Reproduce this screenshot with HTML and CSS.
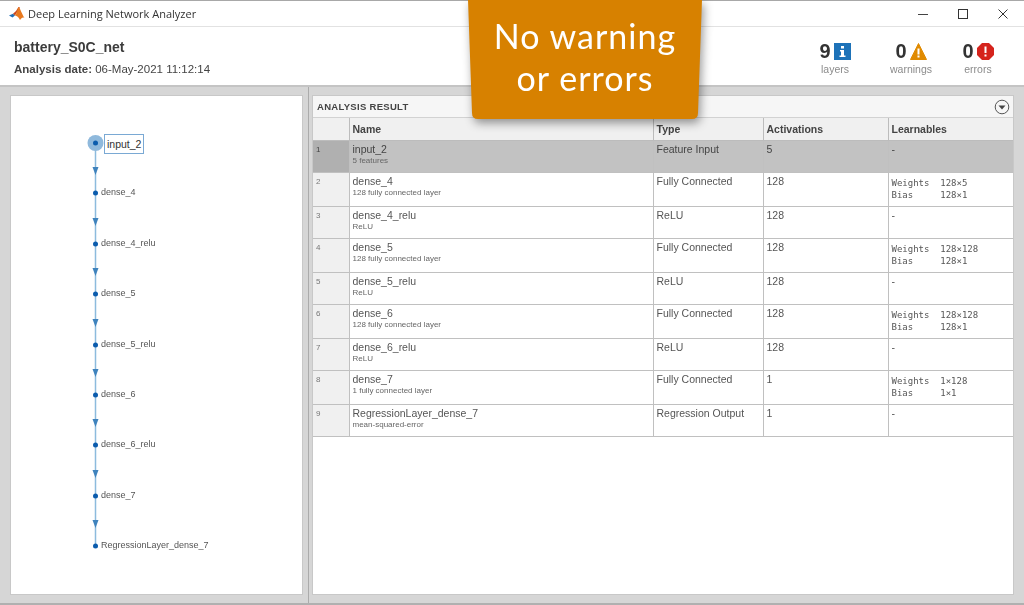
FILE: index.html
```html
<!DOCTYPE html>
<html lang="en">
<head>
  <meta charset="UTF-8">
  <title>Deep Learning Network Analyzer</title>
  <link rel="stylesheet" href="styles.css">
</head>
<body>
  <div class="window">
    <div class="titlebar">
      <svg class="logo" width="16" height="16" viewBox="0 0 16 16">
        <path d="M0 9.5 L4 7.8 L6 9.5 L3.5 11.5 Z" fill="#1f6fb5"/>
        <path d="M4 7.8 L7 5 L9.5 1 L11 1.5 L6 9.5 Z" fill="#c9481e"/>
        <path d="M9.5 1 C11 2 13 8 15.5 12 C13.5 11 12.5 12 11 14 C9.5 11 8 10 6 9.5 C8 7 8.500 3 9.500 1 Z" fill="#e8791f"/>
      </svg>
      <span class="title">Deep Learning Network Analyzer</span>
      <div class="win-controls">
        <svg width="12" height="12" viewBox="0 0 12 12"><path d="M1 6.500 H11" stroke="#444" stroke-width="1"/></svg>
        <svg width="12" height="12" viewBox="0 0 12 12"><rect x="1.500" y="1.500" width="9" height="9" fill="none" stroke="#333" stroke-width="1"/></svg>
        <svg width="12" height="12" viewBox="0 0 12 12"><path d="M1.500 1.500 L10.500 10.500 M10.500 1.500 L1.500 10.500" stroke="#333" stroke-width="1"/></svg>
      </div>
    </div>

    <header class="summary">
      <div class="net-info">
        <h1>battery_S0C_net</h1>
        <p><b>Analysis date:</b> 06-May-2021 11:12:14</p>
      </div>
      <div class="stats">
        <div class="stat stat-layers">
          <div class="stat-top"><span class="num">9</span>
            <svg width="17" height="17" viewBox="0 0 17 17"><rect width="17" height="17" fill="#1d72b8"/><rect x="7" y="3" width="3" height="2.500" fill="#fff"/><path d="M6 7 H10 V12.500 H11.500 V14 H5.500 V12.500 H7 V8.500 H6 Z" fill="#fff"/></svg>
          </div>
          <div class="stat-label">layers</div>
        </div>
        <div class="stat stat-warnings">
          <div class="stat-top"><span class="num">0</span>
            <svg width="17" height="17" viewBox="0 0 17 17"><path d="M8.500 0.500 L16.500 16.500 H0.500 Z" fill="#e08a00" stroke="#e08a00" stroke-linejoin="round"/><rect x="7.500" y="5.500" width="2" height="6" fill="#fff"/><rect x="7.500" y="12.500" width="2" height="2" fill="#fff"/></svg>
          </div>
          <div class="stat-label">warnings</div>
        </div>
        <div class="stat stat-errors">
          <div class="stat-top"><span class="num">0</span>
            <svg width="17" height="17" viewBox="0 0 17 17"><path d="M5 0 H12 L17 5 V12 L12 17 H5 L0 12 V5 Z" fill="#d5231c"/><rect x="7.500" y="3.500" width="2" height="6.500" fill="#fff"/><rect x="7.500" y="11.500" width="2" height="2" fill="#fff"/></svg>
          </div>
          <div class="stat-label">errors</div>
        </div>
      </div>
    </header>

    <main class="body">
      <section class="graph">
        <svg class="edges" width="293" height="499" viewBox="0 0 293 499">
          <path d="M84.500 47 V450" stroke="#8dbbdd" stroke-width="1.500"/>
          <g fill="#3f83bd">
            <path d="M81.500 71 h6 l-3 8 z"/>
            <path d="M81.500 122 h6 l-3 8 z"/>
            <path d="M81.500 172 h6 l-3 8 z"/>
            <path d="M81.500 223 h6 l-3 8 z"/>
            <path d="M81.500 273 h6 l-3 8 z"/>
            <path d="M81.500 323 h6 l-3 8 z"/>
            <path d="M81.500 374 h6 l-3 8 z"/>
            <path d="M81.500 424 h6 l-3 8 z"/>
          </g>
          <circle cx="84.500" cy="47" r="8" fill="#8fb9dc"/>
          <g fill="#0b5cad">
            <circle cx="84.500" cy="47" r="2.500"/>
            <circle cx="84.500" cy="97" r="2.500"/>
            <circle cx="84.500" cy="148" r="2.500"/>
            <circle cx="84.500" cy="198" r="2.500"/>
            <circle cx="84.500" cy="249" r="2.500"/>
            <circle cx="84.500" cy="299" r="2.500"/>
            <circle cx="84.500" cy="349" r="2.500"/>
            <circle cx="84.500" cy="400" r="2.500"/>
            <circle cx="84.500" cy="450" r="2.500"/>
          </g>
        </svg>
        <span class="node selected" style="top: 38px">input_2</span>
        <span class="node" style="top: 90px">dense_4</span>
        <span class="node" style="top: 141px">dense_4_relu</span>
        <span class="node" style="top: 191px">dense_5</span>
        <span class="node" style="top: 242px">dense_5_relu</span>
        <span class="node" style="top: 292px">dense_6</span>
        <span class="node" style="top: 342px">dense_6_relu</span>
        <span class="node" style="top: 393px">dense_7</span>
        <span class="node" style="top: 443px">RegressionLayer_dense_7</span>
      </section>

      <div class="splitter"></div>

      <section class="result">
        <div class="result-head">
          <span>ANALYSIS RESULT</span>
          <svg width="16" height="16" viewBox="0 0 16 16"><circle cx="8" cy="8" r="6.800" fill="none" stroke="#555" stroke-width="1"/><path d="M4.500 6.500 H11.500 L8 10.500 Z" fill="#444"/></svg>
        </div>
        <table>
          <colgroup><col class="c-idx"><col class="c-name"><col class="c-type"><col class="c-act"><col class="c-learn"></colgroup>
          <thead>
            <tr><th></th><th>Name</th><th>Type</th><th>Activations</th><th>Learnables</th></tr>
          </thead>
          <tbody>
            <tr class="sel"><td class="idx">1</td><td>input_2<small>5 features</small></td><td>Feature Input</td><td>5</td><td>-</td></tr>
            <tr><td class="idx">2</td><td>dense_4<small>128 fully connected layer</small></td><td>Fully Connected</td><td>128</td><td class="mono">Weights  128×5
Bias     128×1</td></tr>
            <tr><td class="idx">3</td><td>dense_4_relu<small>ReLU</small></td><td>ReLU</td><td>128</td><td>-</td></tr>
            <tr><td class="idx">4</td><td>dense_5<small>128 fully connected layer</small></td><td>Fully Connected</td><td>128</td><td class="mono">Weights  128×128
Bias     128×1</td></tr>
            <tr><td class="idx">5</td><td>dense_5_relu<small>ReLU</small></td><td>ReLU</td><td>128</td><td>-</td></tr>
            <tr><td class="idx">6</td><td>dense_6<small>128 fully connected layer</small></td><td>Fully Connected</td><td>128</td><td class="mono">Weights  128×128
Bias     128×1</td></tr>
            <tr><td class="idx">7</td><td>dense_6_relu<small>ReLU</small></td><td>ReLU</td><td>128</td><td>-</td></tr>
            <tr><td class="idx">8</td><td>dense_7<small>1 fully connected layer</small></td><td>Fully Connected</td><td>1</td><td class="mono">Weights  1×128
Bias     1×1</td></tr>
            <tr><td class="idx">9</td><td>RegressionLayer_dense_7<small>mean-squared-error</small></td><td>Regression Output</td><td>1</td><td>-</td></tr>
          </tbody>
        </table>
      </section>
    </main>
  </div>

  <div class="callout">
    <div class="callout-bg"></div>
    <p>No warning<br>or errors</p>
  </div>
</body>
</html>
```

FILE: styles.css
```css
/* Global */
html, body {
  margin: 0;
  padding: 0;
  height: 605px;
  overflow: hidden;
  background-color: #fff;
  font-family: "Liberation Sans", Arial, sans-serif;
  color: #444;
}

.window {
  height: 605px;
  display: flex;
  flex-direction: column;
  filter: blur(0.4px);
}

/* Title bar */
.titlebar {
  height: 27px;
  flex: none;
  box-sizing: border-box;
  border-top: 1px solid #a8a8a8;
  border-bottom: 1px solid #e2e2e2;
  display: flex;
  align-items: center;
  padding-left: 9px;
}

.title {
  margin-left: 2px;
  font-size: 11px;
  font-family: "Open Sans", sans-serif;
  color: #333;
  margin-left: 3px;
}

.win-controls {
  margin-left: auto;
  display: flex;
  gap: 28px;
  padding-right: 15px;
}

/* Summary header */
.summary {
  height: 58px;
  flex: none;
  display: flex;
  justify-content: space-between;
  padding: 0 14px;
}

.net-info h1 {
  margin: 12px 0 0;
  font-size: 14px;
  line-height: 17px;
  font-weight: bold;
  color: #3c3c3c;
}

.net-info p {
  margin: 6px 0 0;
  font-size: 11.500px;
  line-height: 14px;
  color: #444;
}

.stats {
  display: flex;
}

.stat {
  text-align: center;
  margin-top: 13px;
}

.stat-layers { width: 60px; margin-right: 16px; }
.stat-warnings { width: 60px; margin-right: 12px; }
.stat-errors { width: 50px; margin-right: 7px; }

.stat-top {
  display: flex;
  justify-content: center;
  align-items: center;
  gap: 3px;
  height: 22px;
}

.num {
  font-size: 20px;
  font-weight: bold;
  color: #333;
}

.stat-label {
  font-size: 10.500px;
  line-height: 13px;
  margin-top: 1px;
  color: #8b8b8b;
}

/* Body panels */
.body {
  flex: 1;
  display: flex;
  background-color: #d6d6d6;
  border-top: 2px solid #c4c4c4;
  border-bottom: 2px solid #b0b0b0;
  padding: 8px 10px;
  gap: 0;
}

.graph {
  position: relative;
  width: 293px;
  flex: none;
  background-color: #fff;
  border: 1px solid #c8c8c8;
  box-sizing: border-box;
  overflow: hidden;
}

.edges {
  position: absolute;
  top: 0;
  left: 0;
}

.node {
  position: absolute;
  left: 90px;
  font-size: 9px;
  line-height: 12px;
  color: #555;
  white-space: nowrap;
}

.node.selected {
  left: 93px;
  padding: 2px 2px;
  line-height: 14px;
  font-size: 10.500px;
  color: #333;
  background-color: #fff;
  border: 1px solid #7aa9d4;
}

.splitter {
  width: 1px;
  margin: -8px 4px -8px 5px;
  background-color: #ababab;
}

.result {
  flex: 1;
  background-color: #fff;
  border: 1px solid #c8c8c8;
  box-sizing: border-box;
  margin-left: -1px;
}

.result-head {
  height: 21px;
  display: flex;
  align-items: center;
  justify-content: space-between;
  padding: 0 3px 0 4px;
  background-color: #f6f6f6;
  border-bottom: 1px solid #d2d2d2;
  font-size: 9.500px;
  font-weight: bold;
  letter-spacing: 0.3px;
  color: #444;
}

/* Table */
table {
  width: 100%;
  table-layout: fixed;
  border-collapse: collapse;
  font-size: 10.500px;
}

.c-idx { width: 36px; }
.c-name { width: 304px; }
.c-type { width: 110px; }
.c-act { width: 125px; }

th {
  height: 22px;
  padding: 0 3px;
  text-align: left;
  font-weight: bold;
  color: #444;
  background-color: #f0f0f0;
  border-right: 1px solid #bcbcbc;
  border-bottom: 1px solid #bcbcbc;
}

th:last-child, td:last-child {
  border-right: none;
}

td {
  height: 29px;
  padding: 2px 3px 0;
  vertical-align: top;
  line-height: 13px;
  color: #555;
  border-right: 1px solid #c0c0c0;
  border-bottom: 1px solid #c0c0c0;
}

td small {
  display: block;
  font-size: 8px;
  line-height: 9px;
  color: #666;
}

td.idx {
  padding-left: 3px;
  font-size: 8px;
  color: #777;
  background-color: #f0f0f0;
}

td.mono {
  padding-top: 4px;
  font-family: "DejaVu Sans Mono", monospace;
  font-size: 9px;
  line-height: 12px;
  white-space: pre;
}

tr.sel td {
  background-color: #c2c2c2;
  color: #444;
}

tr.sel td.idx {
  background-color: #b0b0b0;
}

/* Callout over the screenshot */
.callout {
  position: absolute;
  top: 0;
  left: 468px;
  width: 234px;
  height: 119px;
  filter: drop-shadow(2px 4px 5px rgba(0, 0, 0, 0.4));
}

.callout-bg {
  position: absolute;
  inset: 0;
  background-color: #d78100;
  clip-path: path("M0 0 H234 L230 113 Q230 119 224 119 H10 Q4 119 4 113 Z");
}

.callout p {
  position: relative;
  margin: 0;
  padding-top: 15px;
  text-align: center;
  font-family: Lato, sans-serif;
  font-size: 34px;
  line-height: 42px;
  letter-spacing: 1px;
  color: #fff;
}
```
